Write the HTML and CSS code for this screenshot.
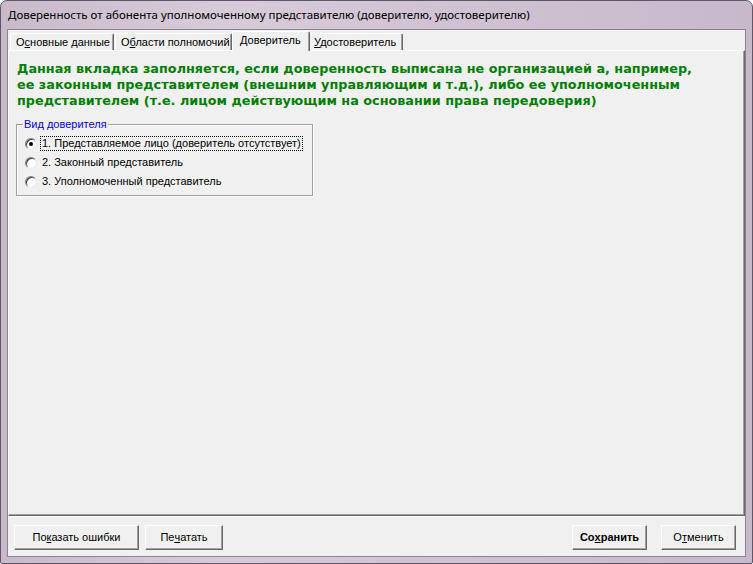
FILE: index.html
```html
<!DOCTYPE html>
<html lang="ru">
<head>
    <meta charset="UTF-8">
    <title>Доверенность от абонента уполномоченному представителю</title>
    <link rel="stylesheet" href="styles.css">
</head>
<body>
    <div class="window">
        <div class="titlebar">Доверенность от абонента уполномоченному представителю (доверителю, удостоверителю)</div>
        <div class="client">
            <div class="tabctl">
                <div class="tabs">
                    <div class="tab tab-1">О<u>с</u>новные данные</div>
                    <div class="tab tab-2">О<u>б</u>ласти полномочий</div>
                    <div class="tab tab-3 active"><u>Д</u>оверитель</div>
                    <div class="tab tab-4"><u>У</u>достоверитель</div>
                </div>
                <div class="panel">
                    <div class="hint">
                        Данная вкладка заполняется, если доверенность выписана не организацией а, например,<br>
                        ее законным представителем (внешним управляющим и т.д.), либо ее уполномоченным<br>
                        представителем (т.е. лицом действующим на основании права передоверия)
                    </div>
                    <div class="group">
                        <div class="group-title">Вид доверителя</div>
                        <div class="radio-list">
                            <div class="radio-row">
                                <span class="radio checked"></span>
                                <span class="radio-label focused">1. Представляемое лицо (доверитель отсутствует)</span>
                            </div>
                            <div class="radio-row">
                                <span class="radio"></span>
                                <span class="radio-label">2. Законный представитель</span>
                            </div>
                            <div class="radio-row">
                                <span class="radio"></span>
                                <span class="radio-label">3. Уполномоченный представитель</span>
                            </div>
                        </div>
                    </div>
                </div>
            </div>
            <div class="footer">
                <div class="btn btn-errors">По<u>к</u>азать ошибки</div>
                <div class="btn btn-print">Пе<u>ч</u>атать</div>
                <div class="spacer"></div>
                <div class="btn btn-save">Со<u>х</u>ранить</div>
                <div class="btn btn-cancel">О<u>т</u>менить</div>
            </div>
        </div>
    </div>
</body>
</html>
```

FILE: styles.css
```css
html, body{
    margin: 0;
    padding: 0;
    background: #ffffff;
}
.window{
    width: 753px;
    height: 564px;
    box-sizing: border-box;
    display: flex;
    flex-direction: column;
    border: 1px solid #5e5866;
    border-radius: 7px 7px 2px 2px;
    background: linear-gradient(90deg, #c9bacb 0%, #d8cbd9 30%, #d0c2d3 60%, #c8b8cb 100%);
    overflow: hidden;
}
.titlebar{
    height: 28px;
    padding-left: 7px;
    line-height: 28px;
    font-family: "Noto Sans", "Liberation Sans", sans-serif;
    font-size: 11.5px;
    color: #000;
    white-space: nowrap;
}
.client{
    flex: 1;
    margin: 0 6px 6px;
    display: flex;
    flex-direction: column;
    background: #f0f0f0;
    border: 1px solid #8c8294;
    font-family: "Liberation Sans", Arial, sans-serif;
    font-size: 11px;
    color: #000;
}
.tabctl{
    flex: 1;
    display: flex;
    flex-direction: column;
}
.tabs{
    height: 20px;
    display: flex;
    align-items: flex-end;
    padding-left: 2px;
}
.tab{
    height: 16px;
    line-height: 16px;
    padding: 0 6px 0 5px;
    border-top: 1px solid #fff;
    border-left: 1px solid #fff;
    border-right: 1px solid #696969;
    box-shadow: inset -1px 0 #a0a0a0;
    border-radius: 2px 2px 0 0;
    white-space: nowrap;
}
.tab-1{ width: 91px; }
.tab-2{ width: 104px; margin-left: 1px; }
.tab-3{ width: 63px; }
.tab-4{ width: 82px; }
.tab.active{
    position: relative;
    z-index: 1;
    height: 19px;
    line-height: 16px;
    margin: 0 -2px -1px 0;
    padding-left: 7px;
    background: #f0f0f0;
}
.tab u, .btn u{
    text-decoration: underline;
    text-underline-offset: 1px;
}
.panel{
    flex: 1;
    border-top: 1px solid #fff;
    border-left: 1px solid #fff;
    border-right: 1px solid #696969;
    border-bottom: 1px solid #696969;
    box-shadow: inset -1px -1px #a0a0a0;
    padding: 10px 8px 0;
}
.hint{
    font-family: "DejaVu Sans", Verdana, sans-serif;
    font-weight: bold;
    font-size: 12.8px;
    line-height: 16px;
    color: #008000;
    white-space: nowrap;
}
.group{
    width: 295px;
    height: 70px;
    margin: 15px 0 0 -1px;
    border: 1px solid #a0a0a0;
    box-shadow: 1px 1px #fff, inset 1px 1px #fff;
}
.group-title{
    width: fit-content;
    height: 13px;
    margin: -7px 0 0 6px;
    padding: 0 1px;
    line-height: 13px;
    background: #f0f0f0;
    color: #0000ff;
}
.radio-list{
    padding-top: 3px;
}
.radio-row{
    height: 19px;
    display: flex;
    align-items: center;
    padding-left: 8px;
}
.radio{
    width: 12px;
    height: 12px;
    box-sizing: border-box;
    border-radius: 50%;
    background: #fff;
    border: 1px solid;
    border-color: #808080 #e8e8e8 #e8e8e8 #808080;
    box-shadow: inset 1px 1px #404040;
    display: flex;
    align-items: center;
    justify-content: center;
}
.radio.checked::after{
    content: "";
    width: 4px;
    height: 4px;
    border-radius: 50%;
    background: #000;
}
.radio-label{
    margin-left: 4px;
    padding: 0 1px;
    line-height: 13px;
    white-space: nowrap;
}
.radio-label.focused{
    outline: 1px dotted #000;
}
.footer{
    height: 40px;
    display: flex;
    align-items: flex-start;
    padding: 8px 9px 0 6px;
    box-sizing: border-box;
    border-top: 1px solid #fff;
}
.spacer{
    flex: 1;
}
.btn{
    height: 25px;
    box-sizing: border-box;
    border: 1px solid;
    border-color: #fff #696969 #696969 #fff;
    box-shadow: inset -1px -1px #a0a0a0;
    display: flex;
    align-items: center;
    justify-content: center;
    padding-bottom: 2px;
    white-space: nowrap;
}
.btn-errors{ width: 125px; }
.btn-print{ width: 78px; margin-left: 6px; }
.btn-save{ width: 75px; font-weight: bold; }
.btn-cancel{ width: 75px; margin-left: 14px; }
```
